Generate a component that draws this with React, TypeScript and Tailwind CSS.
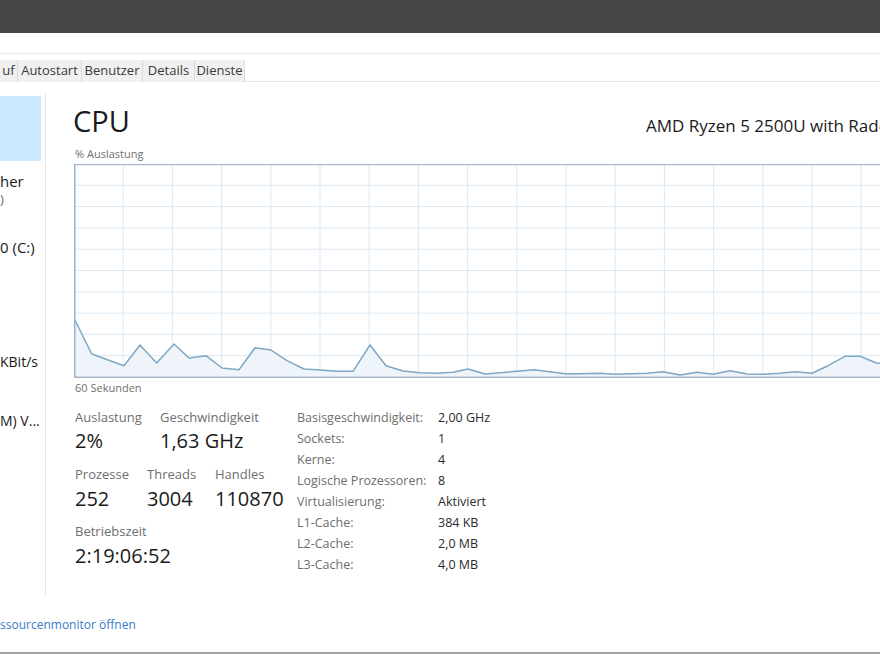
import React from "react";

// CPU history samples, in graph pixel coordinates (x from left edge, y from top).
const samples: [number, number][] = [
  [1, 156], [17.7, 190], [50, 201.7], [66, 181], [82.7, 199], [100, 180],
  [115, 194], [132, 191.7], [148, 204], [165, 205.7], [181, 183.7], [197, 186],
  [213, 196.7], [230, 205], [246.7, 206], [262.7, 207.3], [279, 207.3],
  [296, 181], [312, 201.7], [329, 207], [346, 208.7], [362.7, 209.3],
  [379, 208.3], [394, 205], [411, 210], [443, 207.3], [460, 205.7],
  [493, 210], [526, 209.3], [541, 210.3], [573, 209.3], [589, 207.7],
  [606, 211], [623, 208.3], [639, 210.3], [656, 206.7], [673, 210],
  [689, 210.3], [706, 209.3], [721, 207.7], [738, 209.3], [754, 201.7],
  [771, 192.3], [786, 192.3], [803, 199.3], [820, 197], [840, 195],
];

const GRAPH_W = 840;
const GRAPH_H = 214;

function CpuGraph() {
  const line = samples.map(([x, y]) => `${x},${y}`).join(" ");
  const area = `1,213 ${line} ${GRAPH_W},213`;
  const cols = Array.from({ length: 18 }, (_, i) => (i + 1) * 49.2);
  const rows = Array.from({ length: 9 }, (_, i) => (i + 1) * 21.3);
  return (
    <svg
      width={GRAPH_W}
      height={GRAPH_H}
      viewBox={`0 0 ${GRAPH_W} ${GRAPH_H}`}
      className="block shrink-0"
    >
      <rect x="0" y="0" width={GRAPH_W} height={GRAPH_H} fill="#ffffff" />
      {cols.map((x) => (
        <line key={`c${x}`} x1={x} y1="0" x2={x} y2={GRAPH_H} stroke="#dbe8f3" strokeWidth="1" />
      ))}
      {rows.map((y) => (
        <line key={`r${y}`} x1="0" y1={y} x2={GRAPH_W} y2={y} stroke="#dbe8f3" strokeWidth="1" />
      ))}
      <polygon points={area} fill="#eef4fa" />
      <polyline points={line} fill="none" stroke="#7fa7c3" strokeWidth="1.5" strokeLinejoin="round" />
      <line x1="0" y1="0.5" x2={GRAPH_W} y2="0.5" stroke="#aab9ca" strokeWidth="1.5" />
      <line x1="0" y1={GRAPH_H - 0.75} x2={GRAPH_W} y2={GRAPH_H - 0.75} stroke="#aab9ca" strokeWidth="1.5" />
      <line x1="0.75" y1="0" x2="0.75" y2={GRAPH_H} stroke="#95b5d4" strokeWidth="1.5" />
    </svg>
  );
}

const tabs = [
  { label: "uf", w: "w-[18px]" },
  { label: "Autostart", w: "w-[64px]" },
  { label: "Benutzer", w: "w-[61px]" },
  { label: "Details", w: "w-[52px]" },
  { label: "Dienste", w: "w-[50px]" },
];

const specs: [string, string][] = [
  ["Basisgeschwindigkeit:", "2,00 GHz"],
  ["Sockets:", "1"],
  ["Kerne:", "4"],
  ["Logische Prozessoren:", "8"],
  ["Virtualisierung:", "Aktiviert"],
  ["L1-Cache:", "384 KB"],
  ["L2-Cache:", "2,0 MB"],
  ["L3-Cache:", "4,0 MB"],
];

function Stat({ label, value, size }: { label: string; value: string; size: string }) {
  return (
    <div className="flex flex-col">
      <span className="h-[16px] text-[13px] leading-[16px] text-[#6e6e6e]">{label}</span>
      <span className={`mt-[3px] whitespace-nowrap text-[#1b1b1b] ${size}`}>{value}</span>
    </div>
  );
}

export default function App() {
  return (
    <div className="relative h-[660px] w-[880px] overflow-hidden bg-white font-['Open_Sans',sans-serif]">
      {/* window chrome */}
      <div className="h-[33px] bg-[#484644]" />
      <div className="h-[21px] border-b border-[#ececec]" />

      {/* tab strip */}
      <div className="mt-[6px] flex h-[22px] border-b border-[#e4e4e4]">
        {tabs.map((t) => (
          <div
            key={t.label}
            className={`${t.w} flex h-[22px] items-center justify-center overflow-hidden whitespace-nowrap border-r border-[#d9d9d9] bg-[#f0f0f0] text-[13px] text-[#3a3a3a]`}
          >
            {t.label}
          </div>
        ))}
      </div>

      {/* body */}
      <div className="flex h-[513px]">
        <aside className="flex w-[46px] shrink-0 flex-col">
          <div className="mt-[12px] flex h-[501px] flex-col border-r border-[#e3e3e3] pt-[2px]">
            <div className="h-[65px] w-[41px] bg-[#cce8ff]" />
            <span className="mt-[10px] whitespace-nowrap text-[15px] leading-[20px] text-[#1b1b1b]">her</span>
            <span className="whitespace-nowrap text-[13px] leading-[16px] text-[#6e6e6e]">)</span>
            <span className="mt-[30px] whitespace-nowrap text-[15px] leading-[20px] text-[#1b1b1b]">0 (C:)</span>
            <span className="mt-[95px] whitespace-nowrap text-[14px] leading-[20px] text-[#1b1b1b]">KBit/s</span>
            <span className="mt-[39px] whitespace-nowrap text-[14px] leading-[20px] text-[#1b1b1b]">M) V...</span>
          </div>
        </aside>

        <main className="flex flex-col pl-[27px] pt-[21px]">
          <div className="flex h-[36px] items-baseline">
            <span className="w-[573px] shrink-0 text-[29px] leading-[36px] text-[#1b1b1b]">CPU</span>
            <span className="whitespace-nowrap text-[17px] text-[#1b1b1b]">AMD Ryzen 5 2500U with Radeon</span>
          </div>
          <span className="mt-[8px] h-[14px] pl-[2px] text-[11px] leading-[14px] text-[#707070]">% Auslastung</span>
          <div className="ml-[1px] mt-[3px]">
            <CpuGraph />
          </div>
          <span className="mt-[3px] h-[14px] pl-[2px] text-[11px] leading-[14px] text-[#707070]">60 Sekunden</span>

          <div className="mt-[14px] flex pl-[2px]">
            <div className="flex w-[222px] shrink-0 flex-col">
              <div className="flex h-[57px]">
                <div className="w-[85px]"><Stat label="Auslastung" value="2%" size="text-[20px] leading-[26px]" /></div>
                <Stat label="Geschwindigkeit" value="1,63 GHz" size="text-[20px] leading-[26px]" />
              </div>
              <div className="flex h-[57px]">
                <div className="w-[72px]"><Stat label="Prozesse" value="252" size="text-[20px] leading-[27px]" /></div>
                <div className="w-[68px]"><Stat label="Threads" value="3004" size="text-[20px] leading-[27px]" /></div>
                <Stat label="Handles" value="110870" size="text-[20px] leading-[27px]" />
              </div>
              <div className="flex h-[57px]">
                <Stat label="Betriebszeit" value="2:19:06:52" size="text-[20px] leading-[27px]" />
              </div>
            </div>

            <div className="-mt-[2px] flex flex-col">
              {specs.map(([k, v]) => (
                <div key={k} className="flex h-[21px] text-[12.5px] leading-[21px]">
                  <span className="w-[141px] shrink-0 whitespace-nowrap text-[#6e6e6e]">{k}</span>
                  <span className="whitespace-nowrap text-[#2b2b2b]">{v}</span>
                </div>
              ))}
            </div>
          </div>
        </main>
      </div>

      {/* footer link */}
      <div className="mt-[22px] h-[16px] whitespace-nowrap text-[12px] leading-[16px] text-[#3a7bc8]">
        ssourcenmonitor öffnen
      </div>
      <div className="mt-[19px] h-[2px] bg-[#a3a3a3]" />
    </div>
  );
}
